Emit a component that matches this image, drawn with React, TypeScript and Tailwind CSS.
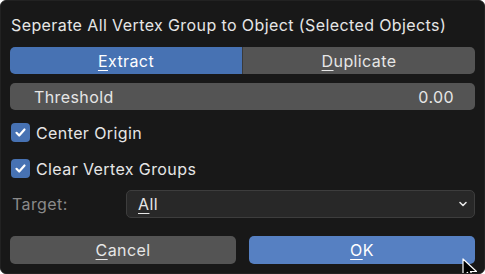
import React from "react";

const font = { fontFamily: "Inter, 'Noto Sans', sans-serif" };

function Mn({ k, rest }: { k: string; rest: string }) {
  return (
    <span>
      <span className="underline underline-offset-[3px] decoration-1">{k}</span>
      {rest}
    </span>
  );
}

function Check({ label }: { label: string }) {
  return (
    <div className="flex items-center gap-[6px] h-[19px]">
      <div className="w-[19px] h-[19px] rounded-[4px] bg-[#4772b3] flex items-center justify-center">
        <svg width="13" height="13" viewBox="0 0 13 13">
          <path d="M2.5 6.8 L5.2 9.5 L10.5 3.5" fill="none" stroke="#fff" strokeWidth="2.2" strokeLinecap="round" strokeLinejoin="round" />
        </svg>
      </div>
      <span className="text-[#e6e6e6]">{label}</span>
    </div>
  );
}

export default function App() {
  return (
    <div
      className="relative w-[485px] h-[274px] bg-[#181818] overflow-hidden rounded-[6px] border border-[#222] px-[9px] pt-[14px] box-border text-[16px] tracking-[0.4px]"
      style={font}
    >
      <div className="h-[20px] leading-[20px] text-[#e6e6e6] pl-px">
        Seperate All Vertex Group to Object (Selected Objects)
      </div>

      <div className="mt-[12px] flex h-[27px] rounded-[5px] overflow-hidden">
        <div className="flex-1 bg-[#4772b3] text-white flex items-center justify-center">
          <Mn k="E" rest="xtract" />
        </div>
        <div className="w-px bg-[#3a3a3a]" />
        <div className="flex-1 bg-[#545454] text-[#e6e6e6] flex items-center justify-center">
          <Mn k="D" rest="uplicate" />
        </div>
      </div>

      <div className="mt-[9px] flex h-[27px] rounded-[5px] bg-[#545454] items-center justify-between pl-[24px] pr-[21px] text-[#e6e6e6]">
        <span>Threshold</span>
        <span>0.00</span>
      </div>

      <div className="mt-[13px] pl-px">
        <Check label="Center Origin" />
      </div>
      <div className="mt-[17px] pl-px">
        <Check label="Clear Vertex Groups" />
      </div>

      <div className="mt-[12px] flex h-[28px] items-center">
        <div className="w-[116px] pl-[2px] text-[#8a8a8a]">Target:</div>
        <div className="flex-1 h-full rounded-[5px] bg-[#282828] border border-[#3d3d3d] flex items-center justify-between pl-[11px] pr-[6px] text-[#e6e6e6]">
          <Mn k="A" rest="ll" />
          <svg width="10" height="10" viewBox="0 0 10 10">
            <path d="M2 3.5 L5 6.5 L8 3.5" fill="none" stroke="#e6e6e6" strokeWidth="1.6" strokeLinecap="round" strokeLinejoin="round" />
          </svg>
        </div>
      </div>

      <div className="mt-[18px] flex h-[28px] gap-[13px]">
        <div className="w-[226px] rounded-[5px] bg-[#545454] text-[#e6e6e6] flex items-center justify-center">
          <Mn k="C" rest="ancel" />
        </div>
        <div className="flex-1 rounded-[5px] bg-[#5680c2] text-white flex items-center justify-center">
          <Mn k="O" rest="K" />
        </div>
      </div>

      <svg className="absolute left-[461px] top-[257px]" width="20" height="24" viewBox="0 0 20 24">
        <path d="M1 1 L1 19 L5.5 14.5 L9 22 L12 20.5 L8.5 13.5 L14.5 13.5 Z" fill="#000" stroke="#fff" strokeWidth="1.2" strokeLinejoin="round" />
      </svg>
    </div>
  );
}
